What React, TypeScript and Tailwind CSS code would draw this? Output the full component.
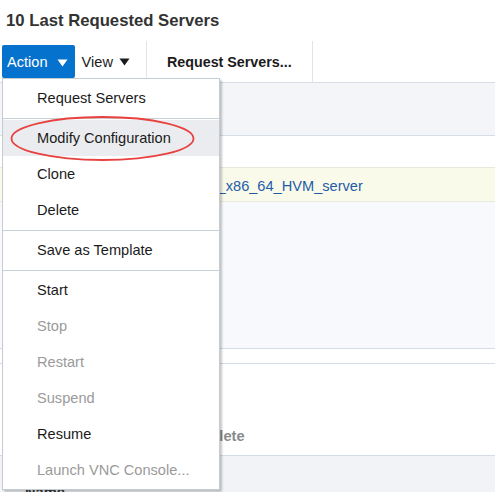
import type { ReactNode } from 'react'

type Item = { label: string; disabled?: boolean; active?: boolean }

const groups: Item[][] = [
  [{ label: 'Request Servers' }],
  [{ label: 'Modify Configuration', active: true }, { label: 'Clone' }, { label: 'Delete' }],
  [{ label: 'Save as Template' }],
  [
    { label: 'Start' },
    { label: 'Stop', disabled: true },
    { label: 'Restart', disabled: true },
    { label: 'Suspend', disabled: true },
    { label: 'Resume' },
    { label: 'Launch VNC Console...', disabled: true },
  ],
]

function Caret({ className }: { className: string }) {
  return (
    <svg className={className} width="11" height="8" viewBox="0 0 11 8">
      <path d="M0.5 0.5 H10.5 L5.5 7.5 Z" fill="currentColor" />
    </svg>
  )
}

function ToolbarSep() {
  return <div className="w-px self-stretch bg-[#dfe4ea]" />
}

function ActionMenu() {
  const rows: ReactNode[] = []
  groups.forEach((group, gi) => {
    if (gi > 0) {
      rows.push(
        <div key={`sep-${gi}`} className="flex h-[4px] items-center">
          <div className="h-px w-full bg-[#c9d1d8]" />
        </div>,
      )
    }
    group.forEach((item) => {
      rows.push(
        <div
          key={item.label}
          className={`flex h-[36px] items-center pl-[34px] pt-[2px] text-[14.6px] ${
            item.active ? 'bg-[#eaecef]' : ''
          } ${item.disabled ? 'text-[#9a9a9a]' : 'text-[#1b1b1b]'}`}
        >
          {item.label}
        </div>,
      )
    })
  })

  return (
    <div className="absolute left-[2px] top-[78px] w-[218px] border border-[#c4ccd3] bg-white py-[1px] shadow-[2px_2px_2px_rgba(0,0,0,0.22)]">
      {rows}
    </div>
  )
}

export default function App() {
  return (
    <div className="relative h-[492px] w-[495px] overflow-hidden bg-white font-['Liberation_Sans',Arial,sans-serif] text-[#333]">
      <h1 className="h-[41px] pl-[6px] pt-[11px] text-[16.7px] font-bold leading-[20px] text-[#333]">
        10 Last Requested Servers
      </h1>

      <div className="flex h-[41px] items-stretch text-[14.6px]">
        <div className="flex items-center pl-[2px]">
          <button className="flex h-[33px] items-center gap-[9px] rounded-[2px] bg-[#0572ce] pl-[5px] pr-[7px] pt-[2px] text-white">
            Action
            <Caret className="text-white" />
          </button>
          <div className="flex items-center gap-[6px] pl-[7px] pr-[16px] pt-[2px] text-[#1b1b1b]">
            View
            <Caret className="text-[#1b1b1b]" />
          </div>
        </div>
        <ToolbarSep />
        <div className="flex items-center px-[20px] pt-[2px] text-[14.3px] font-bold text-[#1b1b1b]">Request Servers...</div>
        <ToolbarSep />
      </div>

      <div className="border-t border-[#d8dee5]">
        <div className="h-[53px] border-b border-[#d8dee5] bg-[#f3f5f8]" />
        <div className="h-[31px] bg-white" />
        <div className="flex h-[35px] items-center border-y border-[#e8eadc] bg-[#fafaeb] pl-[130px] pt-[4px] text-[14.6px] text-[#1f5ca8]">
          OVM_OL6U5_x86_64_HVM_server
        </div>
        <div className="h-[146px] bg-[#f7f9fc]" />
        <div className="h-[16px] border-y border-[#d6dde4] bg-white" />
        <div className="flex h-[92px] items-end border-b border-[#d6dde4] bg-white pb-[10px] pl-[178px] text-[14.6px] leading-[18px] font-bold text-[#8a8a8a]">
          Complete
        </div>
        <div className="h-[40px] bg-[#f1f3f7] pl-[25px] pt-[27px] text-[14.6px] leading-[18px] font-bold text-[#333]">
          Name
        </div>
      </div>

      <ActionMenu />

      <svg className="pointer-events-none absolute left-[10px] top-[115px]" width="186" height="47" viewBox="0 0 186 47">
        <ellipse cx="92.5" cy="23.5" rx="91" ry="21.5" fill="none" stroke="#e8413f" strokeWidth="1.8" />
      </svg>
    </div>
  )
}
